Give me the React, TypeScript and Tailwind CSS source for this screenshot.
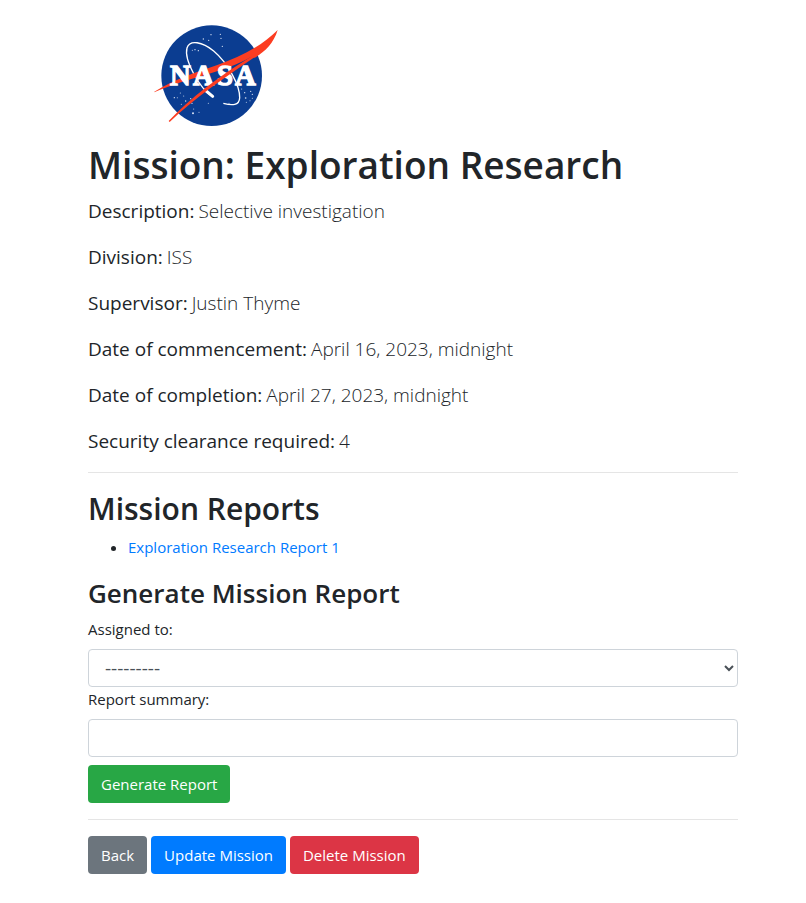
import type { ReactNode } from 'react';

const details = [
  { label: 'Description:', value: 'Selective investigation' },
  { label: 'Division:', value: 'ISS' },
  { label: 'Supervisor:', value: 'Justin Thyme' },
  { label: 'Date of commencement:', value: 'April 16, 2023, midnight' },
  { label: 'Date of completion:', value: 'April 27, 2023, midnight' },
  { label: 'Security clearance required:', value: '4' },
];

const stars: [number, number, number][] = [
  [198, 59, 2], [226, 58, 2], [228, 70, 2], [175, 72, 2], [191, 76, 2], [232, 94, 2],
  [142, 106, 1.5], [150, 104, 2], [160, 107, 2], [106, 234, 1.5], [88, 248, 2],
  [97, 248, 1.5], [116, 243, 1.5], [137, 251, 2], [141, 265, 2], [122, 258, 2],
  [109, 268, 1.5], [146, 282, 1.5], [144, 295, 3], [190, 265, 1.5], [162, 292, 1.5],
  [299, 233, 2], [317, 229, 2], [322, 238, 2], [302, 249, 2.5], [322, 250, 1.5],
  [315, 257, 1.5], [290, 222, 1.5], [252, 265, 1.5], [304, 262, 1.5],
];

function Logo() {
  return (
    <svg viewBox="0 0 435 360" className="block h-[120px] w-[145px]" role="img" aria-label="NASA">
      <circle cx="200" cy="182" r="151" fill="#0b3d91" />
      {stars.map(([x, y, r]) => (
        <circle key={`${x}-${y}`} cx={x} cy={y} r={r} fill="#dbe4f5" />
      ))}
      <path
        d="M203 245C165 222 116 135 126 99C134 73 172 80 206 108C250 145 285 213 284 248C283 272 262 272 235 265"
        fill="none"
        stroke="#fff"
        strokeWidth="4"
      />
      <path d="M180 225L203 244" stroke="#fff" strokeWidth="9" strokeLinecap="round" />
      <path
        d="M28 230C90 192 150 174 215 151C285 126 350 94 398 45C386 84 362 108 330 128L318 126C240 172 120 190 28 232Z"
        fill="#fc3d21"
      />
      <g
        className="font-['Liberation_Serif',serif] font-bold"
        fontSize="86"
        fill="#fff"
        stroke="#fff"
        strokeWidth="4"
      >
        <text x="75" y="209">N</text>
        <text x="144" y="209">A</text>
        <text x="216" y="209">S</text>
        <text x="270" y="209">A</text>
      </g>
      <path d="M71 318C135 250 225 182 320 124L345 116C250 180 150 248 74 321Z" fill="#fc3d21" />
    </svg>
  );
}

const buttonBase = 'h-[38px] rounded px-[13px] text-[15px] leading-6 text-white';

function Field({ id, label, children }: { id: string; label: string; children: ReactNode }) {
  return (
    <div>
      <label htmlFor={id} className="mb-2 block text-[15px] leading-6">{label}</label>
      {children}
    </div>
  );
}

export default function App() {
  return (
    <main className="bg-white pt-[15px] pr-[68px] pb-7 pl-[88px] font-['Open_Sans',sans-serif] text-[#212529]">
      <div className="mb-[5px] pl-[57px]">
        <Logo />
      </div>
      <h1 className="mb-1.5 text-[37px] leading-[50px] font-semibold">Mission: Exploration Research</h1>
      <dl>
        {details.map((d) => (
          <div key={d.label} className="mb-4 flex gap-1 text-[19px] leading-[30px]">
            <dt>{d.label}</dt>
            <dd className="font-light">{d.value}</dd>
          </div>
        ))}
      </dl>
      <hr className="mb-4 border-black/10" />
      <h2 className="mb-1.5 text-[30px] leading-10 font-semibold">Mission Reports</h2>
      <ul className="mb-4 list-disc pl-10 text-[15px] leading-6">
        <li><a href="#report-1" className="text-[#007bff]">Exploration Research Report 1</a></li>
      </ul>
      <h3 className="mb-1.5 text-[26px] leading-9 font-semibold">Generate Mission Report</h3>
      <form onSubmit={(e) => e.preventDefault()}>
        <Field id="assigned" label="Assigned to:">
          <select id="assigned" className="block h-[38px] w-full rounded border border-[#ced4da] bg-white px-3 text-[19px] text-[#495057]">
            <option>---------</option>
          </select>
        </Field>
        <Field id="summary" label="Report summary:">
          <input id="summary" type="text" className="block h-[38px] w-full rounded border border-[#ced4da] bg-white px-3 text-base text-[#495057]" />
        </Field>
        <button type="submit" className={`${buttonBase} mt-2 bg-[#28a745]`}>Generate Report</button>
      </form>
      <hr className="my-4 border-black/10" />
      <div className="flex gap-1">
        <button type="button" className={`${buttonBase} bg-[#6c757d]`}>Back</button>
        <button type="button" className={`${buttonBase} bg-[#007bff]`}>Update Mission</button>
        <button type="button" className={`${buttonBase} bg-[#dc3545]`}>Delete Mission</button>
      </div>
    </main>
  );
}
